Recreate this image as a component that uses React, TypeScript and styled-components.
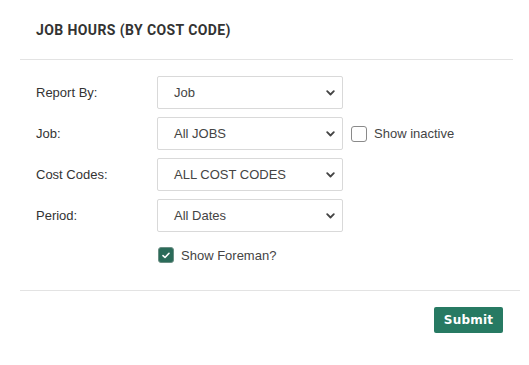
import styled, { createGlobalStyle } from "styled-components";

const GlobalStyle = createGlobalStyle`
  html, body {
    margin: 0;
    padding: 0;
    background: #fff;
  }
  body {
    font-family: "Liberation Sans", Arial, sans-serif;
  }
`;

const Page = styled.div`
  width: 529px;
  height: 365px;
  box-sizing: border-box;
  background: #fff;
`;

const Header = styled.div`
  height: 59px;
  margin: 0 16px 0 20px;
  border-bottom: 1px solid #e3e3e3;
  display: flex;
  align-items: center;
  padding-left: 16px;
  box-sizing: content-box;
`;

const Title = styled.h1`
  margin: 0;
  font-family: Roboto, "Liberation Sans", Arial, sans-serif;
  font-size: 14px;
  font-weight: 700;
  color: #333;
  letter-spacing: 0.4px;
`;

const Form = styled.form`
  display: flex;
  flex-direction: column;
  gap: 8px;
  padding: 16px 0 0 36px;
`;

const Row = styled.div`
  display: flex;
  align-items: center;
  height: 33px;
`;

const Label = styled.label`
  width: 121px;
  font-size: 13px;
  color: #333;
`;

const SelectBox = styled.div`
  position: relative;
  width: 186px;
  height: 33px;
  box-sizing: border-box;
  border: 1px solid #d9d9d9;
  border-radius: 2px;
  display: flex;
  align-items: center;
  padding-left: 16px;
  font-size: 13px;
  color: #444;
  svg {
    position: absolute;
    right: 7px;
    top: 13px;
  }
`;

const CheckRow = styled.div<{ $indent?: number }>`
  display: flex;
  align-items: center;
  gap: 7px;
  margin-left: ${(p) => p.$indent ?? 0}px;
  font-size: 13px;
  color: #444;
`;

const Box = styled.span<{ $checked?: boolean }>`
  width: 16px;
  height: 16px;
  box-sizing: border-box;
  border-radius: 3px;
  border: 1px solid ${(p) => (p.$checked ? "#6b8f84" : "#8a8a8a")};
  background: ${(p) => (p.$checked ? "#2b6b59" : "#fff")};
  display: flex;
  align-items: center;
  justify-content: center;
`;

const ForemanRow = styled.div`
  margin: 7px 0 0 121px;
  height: 16px;
  display: flex;
`;

const Footer = styled.div`
  margin: 27px 9px 0 20px;
  border-top: 1px solid #e3e3e3;
  padding: 16px 17px 0 0;
  display: flex;
  justify-content: flex-end;
`;

const SubmitBtn = styled.button`
  width: 69px;
  height: 26px;
  border: none;
  border-radius: 2px;
  background: #277a63;
  color: #fff;
  font-family: "DejaVu Sans", Verdana, sans-serif;
  font-weight: 700;
  font-size: 12px;
  letter-spacing: 0.2px;
  padding: 0;
  cursor: pointer;
`;

function Chevron() {
  return (
    <svg width="9" height="6" viewBox="0 0 9 6">
      <path d="M1.2 1.2 L4.5 4.5 L7.8 1.2" fill="none" stroke="#444" strokeWidth="1.8" strokeLinecap="round" strokeLinejoin="round" />
    </svg>
  );
}

function Select({ value }: { value: string }) {
  return (
    <SelectBox>
      {value}
      <Chevron />
    </SelectBox>
  );
}

function Check({ checked, label, indent }: { checked?: boolean; label: string; indent?: number }) {
  return (
    <CheckRow $indent={indent}>
      <Box $checked={checked}>
        {checked && (
          <svg width="8" height="7" viewBox="0 0 8 7">
            <path d="M1 3.6 L3 5.5 L7 1.3" fill="none" stroke="#fff" strokeWidth="1.6" strokeLinecap="round" strokeLinejoin="round" />
          </svg>
        )}
      </Box>
      {label}
    </CheckRow>
  );
}

export default function App() {
  return (
    <Page>
      <GlobalStyle />
      <Header>
        <Title>JOB HOURS (BY COST CODE)</Title>
      </Header>
      <Form onSubmit={(e) => e.preventDefault()}>
        <Row>
          <Label>Report By:</Label>
          <Select value="Job" />
        </Row>
        <Row>
          <Label>Job:</Label>
          <Select value="All JOBS" />
          <Check label="Show inactive" indent={8} />
        </Row>
        <Row>
          <Label>Cost Codes:</Label>
          <Select value="ALL COST CODES" />
        </Row>
        <Row>
          <Label>Period:</Label>
          <Select value="All Dates" />
        </Row>
        <ForemanRow>
          <Check checked label="Show Foreman?" indent={1} />
        </ForemanRow>
      </Form>
      <Footer>
        <SubmitBtn>Submit</SubmitBtn>
      </Footer>
    </Page>
  );
}
